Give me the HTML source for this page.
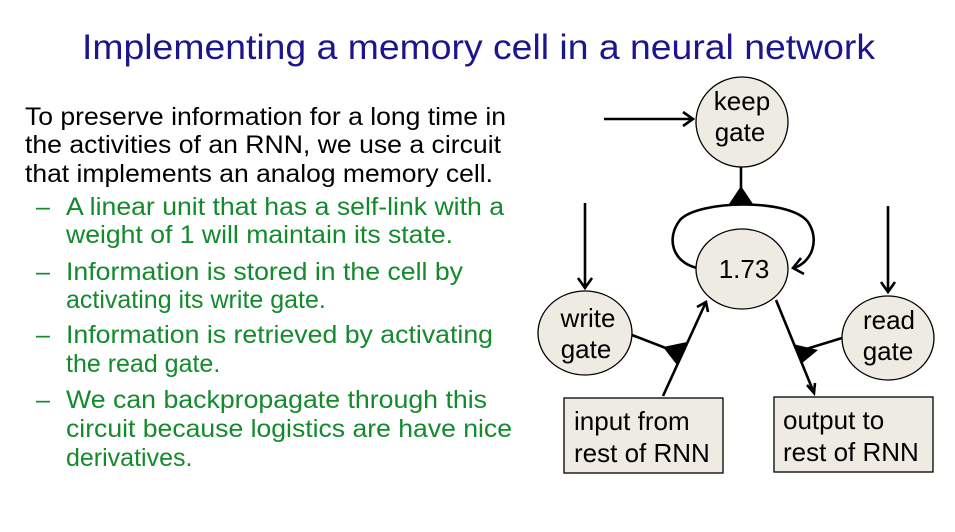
<!DOCTYPE html>
<html><head><meta charset="utf-8"><style>
html,body{margin:0;padding:0;background:#fff;}
svg{display:block;font-family:"Liberation Sans",Arial,sans-serif;}
</style></head><body>
<svg width="955" height="532" viewBox="0 0 955 532" xmlns="http://www.w3.org/2000/svg">
<text x="82" y="59" font-size="35" fill="#1c168e" textLength="793" lengthAdjust="spacingAndGlyphs">Implementing a memory cell in a neural network</text>
<g font-size="25" fill="#000">
<text x="25" y="125" textLength="481" lengthAdjust="spacingAndGlyphs">To preserve information for a long time in</text>
<text x="25" y="153" textLength="476" lengthAdjust="spacingAndGlyphs">the activities of an RNN, we use a circuit</text>
<text x="25" y="182" textLength="468" lengthAdjust="spacingAndGlyphs">that implements an analog memory cell.</text>
</g>
<g font-size="25" fill="#138a2c">
<text x="36" y="215">–</text>
<text x="66" y="215" textLength="438" lengthAdjust="spacingAndGlyphs">A linear unit that has a self-link with a</text>
<text x="66" y="243" textLength="387" lengthAdjust="spacingAndGlyphs">weight of 1 will maintain its state.</text>
<text x="36" y="280">–</text>
<text x="66" y="280" textLength="397" lengthAdjust="spacingAndGlyphs">Information is stored in the cell by</text>
<text x="66" y="308">activating its write gate.</text>
<text x="36" y="343">–</text>
<text x="66" y="343" textLength="427" lengthAdjust="spacingAndGlyphs">Information is retrieved by activating</text>
<text x="66" y="372">the read gate.</text>
<text x="36" y="408">–</text>
<text x="66" y="408" textLength="421" lengthAdjust="spacingAndGlyphs">We can backpropagate through this</text>
<text x="66" y="437" textLength="446" lengthAdjust="spacingAndGlyphs">circuit because logistics are have nice</text>
<text x="66" y="466">derivatives.</text>
</g>
<g stroke="#000" stroke-width="2.6" fill="none">
<path d="M604 119 L693 119 M683 112 L693 119 L683 126"/>
<path d="M585 203 L585 288 M578 278 L585 288 L592 278"/>
<path d="M888 206 L888 292 M881 282 L888 292 L895 282"/>
<path d="M741 167 L741 200"/>
<path d="M697 268 C672 262 666 238 680 220 C698 200 790 198 808 222 C820 240 812 262 794 268"/>
<path d="M801 258 L793 268 L804 274"/>
<path d="M663 396 L706 302 M697 307 L706 302 L708 312"/>
<path d="M632 335 L676 352"/>
<path d="M776 300 L814 393 M807 385 L814 393 L815 383"/>
<path d="M842 338 L803 350"/>
</g>
<g fill="#000">
<polygon points="729,204 753,204 741,186"/>
<polygon points="663,347 687,342 677,365"/>
<polygon points="793,344 818,350 801,364"/>
</g>
<g fill="#eeece2" stroke="#000" stroke-width="1.3">
<ellipse cx="742" cy="122" rx="46" ry="45"/>
<ellipse cx="742" cy="269" rx="46" ry="40"/>
<ellipse cx="585" cy="333" rx="47" ry="42"/>
<ellipse cx="888" cy="338" rx="46" ry="42"/>
<rect x="564" y="398" width="159" height="75"/>
<rect x="774" y="397" width="159" height="75"/>
</g>
<g font-size="26" fill="#000">
<text x="742" y="110" text-anchor="middle">keep</text>
<text x="740" y="141" text-anchor="middle">gate</text>
<text x="744" y="278" text-anchor="middle">1.73</text>
<text x="588" y="327" text-anchor="middle">write</text>
<text x="586" y="358" text-anchor="middle">gate</text>
<text x="889" y="329" text-anchor="middle">read</text>
<text x="888" y="360" text-anchor="middle">gate</text>
<text x="574" y="430">input from</text>
<text x="574" y="462">rest of RNN</text>
<text x="783" y="429">output to</text>
<text x="783" y="461">rest of RNN</text>
</g>
</svg>
</body></html>
